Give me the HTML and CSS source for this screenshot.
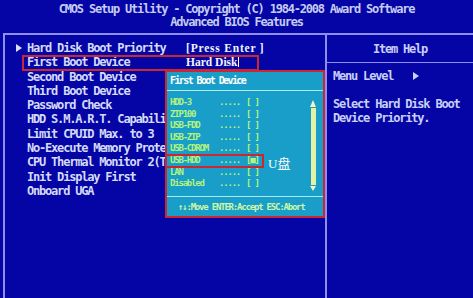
FILE: index.html
```html
<!DOCTYPE html>
<html lang="zh-CN">
<head>
    <meta charset="UTF-8">
    <title>Advanced BIOS Features</title>
    <link rel="stylesheet" href="styles.css">
</head>
<body>
    <div class="screen">
        <div class="header">
            <div>CMOS Setup Utility - Copyright (C) 1984-2008 Award Software</div>
            <div>Advanced BIOS Features</div>
        </div>

        <div class="frame">
            <!-- 左侧：设置项 -->
            <div class="settings">
                <div class="row">
                    <span class="mark"><svg width="6" height="8" viewBox="0 0 6 8"><polygon points="0,0 6,4 0,8" fill="#d8def8"/></svg></span>
                    <span class="label">Hard Disk Boot Priority</span>
                    <span class="value wide">[Press Enter ]</span>
                </div>
                <div class="row">
                    <span class="mark"></span>
                    <span class="label">First Boot Device</span>
                    <span class="value">Hard Disk<i class="cursor"></i></span>
                </div>
                <div class="row"><span class="mark"></span><span class="label">Second Boot Device</span></div>
                <div class="row"><span class="mark"></span><span class="label">Third Boot Device</span></div>
                <div class="row"><span class="mark"></span><span class="label">Password Check</span></div>
                <div class="row"><span class="mark"></span><span class="label">HDD S.M.A.R.T. Capability</span></div>
                <div class="row"><span class="mark"></span><span class="label">Limit CPUID Max. to 3</span></div>
                <div class="row"><span class="mark"></span><span class="label">No-Execute Memory Protect</span></div>
                <div class="row"><span class="mark"></span><span class="label">CPU Thermal Monitor 2(TM2)</span></div>
                <div class="row"><span class="mark"></span><span class="label">Init Display First</span></div>
                <div class="row"><span class="mark"></span><span class="label">Onboard UGA</span></div>

                <div class="hl hl-row"></div>
            </div>

            <!-- 右侧：帮助 -->
            <div class="help">
                <div class="help-title">Item Help</div>
                <div class="help-body">
                    <div class="help-line">Menu Level <svg class="help-arrow" width="6" height="8" viewBox="0 0 6 8"><polygon points="0,0 6,4 0,8" fill="#c8d0f8"/></svg></div>
                    <div class="help-line"></div>
                    <div class="help-line">Select Hard Disk Boot</div>
                    <div class="help-line">Device Priority.</div>
                </div>
            </div>
        </div>

        <!-- 弹出菜单 -->
        <div class="popup">
            <div class="popup-title">First Boot Device</div>
            <div class="popup-main">
                <div class="options">
                    <div class="opt"><span class="opt-name">HDD-3</span><span class="opt-dots">.....</span><span>[ ]</span></div>
                    <div class="opt"><span class="opt-name">ZIP100</span><span class="opt-dots">.....</span><span>[ ]</span></div>
                    <div class="opt"><span class="opt-name">USB-FDD</span><span class="opt-dots">.....</span><span>[ ]</span></div>
                    <div class="opt"><span class="opt-name">USB-ZIP</span><span class="opt-dots">.....</span><span>[ ]</span></div>
                    <div class="opt"><span class="opt-name">USB-CDROM</span><span class="opt-dots">.....</span><span>[ ]</span></div>
                    <div class="opt"><span class="opt-name">USB-HDD</span><span class="opt-dots">.....</span><span>[&#9632;]</span></div>
                    <div class="opt"><span class="opt-name">LAN</span><span class="opt-dots">.....</span><span>[ ]</span></div>
                    <div class="opt"><span class="opt-name">Disabled</span><span class="opt-dots">.....</span><span>[ ]</span></div>
                </div>
                <div class="scrollbar">
                    <svg width="6" height="7" viewBox="0 0 6 7"><polygon points="3,0 6,7 0,7" fill="#f0f8c0"/></svg>
                    <div class="thumb"></div>
                    <svg width="6" height="5" viewBox="0 0 6 5"><polygon points="0,0 6,0 3,5" fill="#f0f8c0"/></svg>
                </div>
            </div>
            <div class="popup-foot">&#8593;&#8595;:Move ENTER:Accept ESC:Abort</div>

            <div class="hl hl-opt"></div>
            <div class="udisk">U盘</div>
        </div>
    </div>
</body>
</html>
```

FILE: styles.css
```css
body {
    margin: 0;
    background: #0505a6;
    font-family: 'DejaVu Sans Mono', 'Liberation Mono', monospace;
    font-weight: bold;
    color: #d4daf8;
}

.screen {
    position: relative;
    width: 473px;
    height: 298px;
    overflow: hidden;
}

.header {
    padding-top: 3px;
    height: 33px;
    box-sizing: border-box;
    text-align: center;
    font-size: 12px;
    line-height: 12.5px;
    letter-spacing: -1.2px;
    color: #c4ccf2;
}

.frame {
    display: flex;
    margin-left: 3px;
    border-top: 2px solid #8e8ef0;
    border-left: 2px solid #8e8ef0;
    height: 263px;
}

/* 左侧设置项 */
.settings {
    position: relative;
    width: 320px;
    padding-top: 6px;
    font-size: 12px;
    letter-spacing: -1.2px;
}

.row {
    display: flex;
    height: 14.3px;
    line-height: 14.3px;
    white-space: nowrap;
}

.mark {
    width: 22px;
    flex: none;
    display: flex;
    align-items: center;
}

.mark svg {
    margin-left: 11px;
}

.label {
    width: 159px;
    flex: none;
}

.value {
    font-family: 'Liberation Serif', 'DejaVu Serif', serif;
    font-size: 11.5px;
    letter-spacing: 0;
    color: #f2f4ff;
}

.value.wide {
    letter-spacing: 0.8px;
}

.cursor {
    display: inline-block;
    width: 1px;
    height: 10px;
    margin-left: 1px;
    vertical-align: -1px;
    background: #ffffff;
}

.hl {
    position: absolute;
    border: 2px solid #cc2630;
    box-sizing: border-box;
}

.hl-row {
    left: 17px;
    top: 20px;
    width: 237px;
    height: 16px;
}

/* 右侧帮助 */
.help {
    flex: 1;
    border-left: 2px solid #8e8ef0;
    font-size: 12px;
    letter-spacing: -1.2px;
    color: #c8d0f8;
}

.help-title {
    height: 28px;
    padding-top: 7px;
    box-sizing: border-box;
    line-height: 14px;
    text-align: center;
    border-bottom: 1px solid #8e8ef0;
}

.help-body {
    padding: 6px 0 0 6px;
}

.help-line {
    height: 14px;
    line-height: 14px;
    white-space: nowrap;
}

.help-arrow {
    margin-left: 14px;
}

/* 弹出菜单 */
.popup {
    position: absolute;
    left: 165px;
    top: 70px;
    width: 160px;
    height: 148px;
    box-sizing: border-box;
    border: 2px solid #cc2630;
    background: #189ec8;
    display: flex;
    flex-direction: column;
}

.popup-title {
    height: 18px;
    line-height: 18px;
    padding-left: 3px;
    font-size: 10px;
    letter-spacing: -1.6px;
    color: #ffffff;
    border-bottom: 1px solid #a6eef2;
}

.popup-main {
    display: flex;
    height: 105px;
    border-bottom: 1px solid #a6eef2;
}

.options {
    flex: 1;
    padding: 6px 0 0 3px;
    font-size: 9px;
    letter-spacing: -1.2px;
    color: #b4f47a;
}

.opt {
    display: flex;
    height: 11.6px;
    line-height: 11.6px;
    white-space: nowrap;
}

.opt-name {
    width: 49px;
}

.opt-dots {
    width: 27px;
}

.scrollbar {
    width: 6px;
    margin: 9px 7px 0 0;
    display: flex;
    flex-direction: column;
    align-items: center;
}

.thumb {
    width: 5px;
    height: 77px;
    margin: 1px 0;
    background: #e4f2a6;
}

.popup-foot {
    flex: 1;
    padding-left: 11px;
    display: flex;
    align-items: center;
    font-size: 9px;
    letter-spacing: -1.2px;
    color: #cdf6a6;
}

.hl-opt {
    left: -2px;
    top: 82px;
    width: 99px;
    height: 14px;
}

.udisk {
    position: absolute;
    left: 101px;
    top: 81px;
    font-family: 'Liberation Serif', 'Noto Sans CJK SC', serif;
    font-weight: normal;
    font-size: 13px;
    color: #ffffff;
}
```
